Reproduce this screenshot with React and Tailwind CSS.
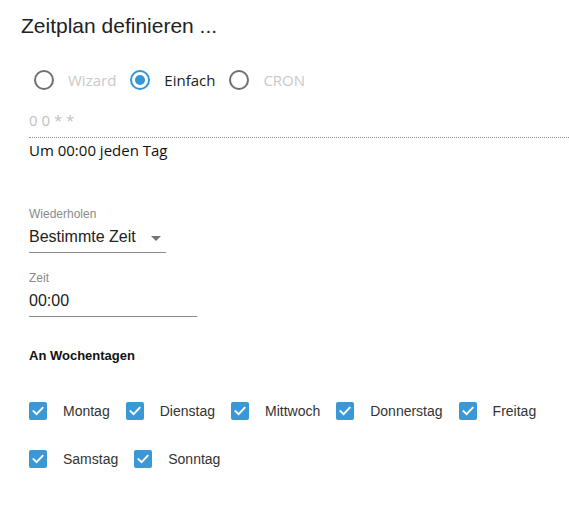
import React from 'react'

const modes = [
    { label: 'Wizard', checked: false },
    { label: 'Einfach', checked: true },
    { label: 'CRON', checked: false },
]

const rows = [
    ['Montag', 'Dienstag', 'Mittwoch', 'Donnerstag', 'Freitag'],
    ['Samstag', 'Sonntag'],
]

function Radio({ label, checked }) {
    return (
        <label className="flex items-center gap-[14px]">
            <span
                className={
                    checked
                        ? 'flex h-[20px] w-[20px] items-center justify-center rounded-full border-2 border-[#3497d3]'
                        : 'flex h-[20px] w-[20px] items-center justify-center rounded-full border-2 border-[#707070]'
                }
            >
                {checked && <span className="h-[10px] w-[10px] rounded-full bg-[#3497d3]" />}
            </span>
            <span className={checked ? 'text-[#222]' : 'text-[#c9c9c9]'}>{label}</span>
        </label>
    )
}

function Checkbox({ label }) {
    return (
        <label className="flex items-center gap-[16px]">
            <span className="flex h-[18px] w-[18px] items-center justify-center rounded-[2px] bg-[#3a98d6]">
                <svg width="14" height="14" viewBox="0 0 14 14" fill="none">
                    <path d="M2.5 7.2 L5.6 10.2 L11.6 3.8" stroke="white" strokeWidth="1.9" strokeLinecap="square" />
                </svg>
            </span>
            <span className="text-[14px] leading-[18px] text-[#333]">{label}</span>
        </label>
    )
}

export default function App() {
    return (
        <div className="h-[505px] w-[569px] overflow-hidden bg-white font-['Liberation_Sans',Arial,sans-serif]">
            <h1 className="pl-[21px] pt-[14px] text-[21px] leading-[24px] text-[#222]">Zeitplan definieren ...</h1>

            <div className="mt-[32px] flex h-[20px] items-center gap-[14px] pl-[34px] font-['Open_Sans',sans-serif] text-[15px] leading-[20px]">
                {modes.map((m) => (
                    <Radio key={m.label} label={m.label} checked={m.checked} />
                ))}
            </div>

            <div className="pl-[29px]">
                <div className="mt-[20px] border-b border-dotted border-[#8f8f8f] pb-[7px] font-['Open_Sans',sans-serif] text-[15px] leading-[20px] text-[#c2c2c2]">
                    0 0 * *
                </div>
                <p className="mt-[2px] font-['Open_Sans',sans-serif] text-[15px] leading-[20px] text-[#111]">Um 00:00 jeden Tag</p>

                <div className="mt-[47px] text-[12px] leading-[14px] text-[#8a8a8a]">Wiederholen</div>
                <div className="mt-[6px] flex w-[137px] items-center justify-between border-b border-[#8a8a8a] pb-[5px] text-[16px] leading-[20px] text-[#222]">
                    <span>Bestimmte Zeit</span>
                    <svg width="10" height="5" viewBox="0 0 10 5" className="mr-[5px] mt-[2px]">
                        <path d="M0 0 L10 0 L5 5 Z" fill="#757575" />
                    </svg>
                </div>

                <div className="mt-[18px] text-[12px] leading-[14px] text-[#8a8a8a]">Zeit</div>
                <div className="mt-[6px] w-[168px] border-b border-[#8a8a8a] pb-[5px] text-[16px] leading-[20px] text-[#222]">00:00</div>

                <h2 className="mt-[31px] text-[13px] font-bold leading-[16px] text-[#111]">An Wochentagen</h2>

                <div className="mt-[38px] flex flex-col gap-[30px]">
                    {rows.map((row, idx) => (
                        <div key={idx} className="flex items-center gap-[16px]">
                            {row.map((day) => (
                                <Checkbox key={day} label={day} />
                            ))}
                        </div>
                    ))}
                </div>
            </div>
        </div>
    )
}
